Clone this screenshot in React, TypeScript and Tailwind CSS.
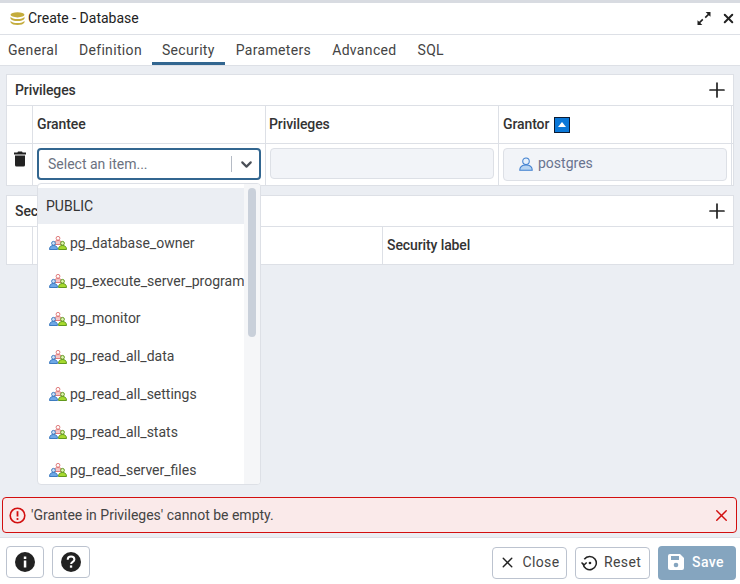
import { ChevronDown, Plus, X } from 'lucide-react';

const roles = [
  'pg_database_owner',
  'pg_execute_server_program',
  'pg_monitor',
  'pg_read_all_data',
  'pg_read_all_settings',
  'pg_read_all_stats',
  'pg_read_server_files',
];

function DbIcon() {
  return (
    <svg width="15" height="13" viewBox="0 0 16 14" className="shrink-0">
      <ellipse cx="8" cy="3" rx="7.500" ry="2.800" fill="#c4ac3c" />
      <path d="M.5 5c1 1.700 3.800 2.500 7.500 2.500s6.500-.8 7.500-2.500v2.300c-1 1.700-3.800 2.500-7.500 2.500s-6.500-.8-7.500-2.500z" fill="#c4ac3c" />
      <path d="M.5 9.300c1 1.700 3.800 2.500 7.500 2.500s6.500-.8 7.500-2.500v1.900c-1 1.800-3.800 2.700-7.500 2.700s-6.500-.9-7.500-2.700z" fill="#c4ac3c" />
    </svg>
  );
}

function Person({ x, y, head, fill, stroke }: { x: number; y: number; head: string; fill: string; stroke: string }) {
  return (
    <g transform={`translate(${x} ${y})`}>
      <circle cx="4.500" cy="2.300" r="1.900" fill={head} stroke={stroke} strokeWidth=".9" />
      <path d="M.5 8.500c0-2.700 1.400-4 4-4s4 1.300 4 4z" fill={fill} stroke={stroke} strokeWidth=".9" />
    </g>
  );
}

function GroupIcon() {
  return (
    <svg width="18" height="14" viewBox="0 0 18 14" className="shrink-0">
      <Person x={4.500} y={0} head="#fff" fill="#f6c6c6" stroke="#dc6e6e" />
      <Person x={0} y={5} head="#cfe2f7" fill="#6fa8e6" stroke="#2f70ba" />
      <Person x={9} y={5} head="#dff3b0" fill="#a6d92f" stroke="#558f10" />
    </svg>
  );
}

function UserIcon() {
  return (
    <svg width="14" height="14" viewBox="0 0 15 15" className="shrink-0">
      <circle cx="7.500" cy="4.500" r="3.500" fill="#e6f0fb" stroke="#3f7fcf" strokeWidth="1.100" />
      <path d="M.8 14.300c0-3.800 2.500-5.700 6.700-5.700s6.700 1.900 6.700 5.700z" fill="#b5d3f2" stroke="#3f7fcf" strokeWidth="1.100" />
    </svg>
  );
}

function Trash() {
  return (
    <svg width="12" height="16" viewBox="0 0 12 15">
      <path d="M4 0h4l.6 1H12v2H0V1h3.400zM1 4h10v9.500A1.500 1.500 0 0 1 9.500 15h-7A1.500 1.500 0 0 1 1 13.500z" fill="#222" />
    </svg>
  );
}

function ExpandIcon() {
  return (
    <svg width="14" height="13" viewBox="0 0 14 14" className="shrink-0">
      <path d="M8.800 0H14v5.200l-1.800-1.800-3.300 3.300-1.200-1.200 3.300-3.300z" fill="#222" />
      <path d="M5.200 14H0V8.800l1.800 1.800 3.300-3.300 1.200 1.200-3.300 3.300z" fill="#222" />
    </svg>
  );
}

export default function App() {
  return (
    <div className="relative flex h-[584px] w-[740px] flex-col overflow-hidden bg-white text-[14px] text-[#222] [font-family:Roboto,sans-serif]">
      <div className="h-[3px] bg-[#d8dbe1]" />
      <div className="flex h-[32px] items-center border-b border-[#dde0e6] pr-[4px] pl-[10px]">
        <DbIcon />
        <span className="ml-[3px] text-[14px]">Create - Database</span>
        <span className="ml-auto">
          <ExpandIcon />
        </span>
        <X className="ml-[10px]" size={15} strokeWidth={3.200} color="#222" />
      </div>
      <div className="flex h-[31px] items-stretch border-b border-[#dde0e6] text-[14px] tracking-[0.33px] text-[#444]">
        <div className="flex items-center pr-[21px] pl-[8px]">General</div>
        <div className="flex items-center pr-[10px]">Definition</div>
        <div className="flex items-center border-b-[3px] border-[#326690] px-[10px] pt-[3px]">Security</div>
        <div className="flex items-center pl-[11px]">Parameters</div>
        <div className="flex items-center pl-[21px]">Advanced</div>
        <div className="flex items-center pl-[21px]">SQL</div>
      </div>

      <div className="flex flex-1 flex-col gap-[9px] bg-[#ebeef3] px-[6px] pt-[8px]">
        <div className="border border-[#dde0e6] bg-white">
          <div className="flex h-[31px] items-center border-b border-[#dde0e6] pr-[4px] pl-[8px]">
            <span className="font-medium tracking-[-0.1px] text-[#333]">Privileges</span>
            <Plus className="ml-auto" size={24} strokeWidth={1.700} color="#222" />
          </div>
          <div className="flex h-[38px] border-b border-[#dde0e6] font-medium tracking-[-0.1px] text-[#333]">
            <div className="w-[26px] border-r border-[#dde0e6]" />
            <div className="flex w-[233px] items-center border-r border-[#dde0e6] pl-[4px]">Grantee</div>
            <div className="flex w-[233px] items-center border-r border-[#dde0e6] pl-[3px]">Privileges</div>
            <div className="flex w-[233px] items-center border-r border-[#dde0e6] pl-[4px]">
              Grantor
              <span className="ml-[5px] flex h-[16px] w-[16px] items-center justify-center border border-[#0b1b33] bg-[#0b78d8]">
                <span className="h-0 w-0 border-x-[4px] border-b-[5px] border-x-transparent border-b-white" />
              </span>
            </div>
          </div>
          <div className="flex h-[41px]">
            <div className="flex w-[26px] justify-center border-r border-[#dde0e6] pt-[7px]">
              <Trash />
            </div>
            <div className="w-[233px] border-r border-[#dde0e6] pt-[4px] pl-[4px]">
              <div className="flex h-[32px] w-[224px] items-center rounded-[4px] border-2 border-[#326690] bg-white">
                <span className="pl-[9px] text-[#6b7280]">Select an item...</span>
                <span className="ml-auto h-[16px] w-px bg-[#b5bbc5]" />
                <ChevronDown className="mr-[4px] ml-[6px]" size={17} strokeWidth={3} color="#4a4f57" />
              </div>
            </div>
            <div className="w-[233px] border-r border-[#dde0e6] pt-[4px] pl-[4px]">
              <div className="h-[31px] w-[224px] rounded-[4px] border border-[#dde0e6] bg-[#f2f4f8]" />
            </div>
            <div className="w-[233px] border-r border-[#dde0e6] pt-[4px] pl-[4px]">
              <div className="flex h-[33px] w-[224px] items-center gap-[5px] rounded-[4px] border border-[#dde0e6] bg-[#f2f4f8] pb-[2px] pl-[15px] text-[#69738f]">
                <UserIcon />
                postgres
              </div>
            </div>
          </div>
        </div>

        <div className="border border-[#dde0e6] bg-white">
          <div className="flex h-[31px] items-center border-b border-[#dde0e6] pr-[4px] pl-[8px]">
            <span className="font-medium tracking-[-0.1px] text-[#333]">Security labels</span>
            <Plus className="ml-auto" size={24} strokeWidth={1.700} color="#222" />
          </div>
          <div className="flex h-[37px] font-medium tracking-[-0.1px] text-[#333]">
            <div className="w-[26px] border-r border-[#dde0e6]" />
            <div className="w-[350px] border-r border-[#dde0e6]" />
            <div className="flex items-center pl-[4px]">Security label</div>
          </div>
        </div>
      </div>

      {/* Open grantee dropdown */}
      <div className="absolute top-[183px] left-[37px] flex h-[302px] w-[224px] overflow-hidden rounded-[4px] border border-[#dde0e6] bg-white">
        <div className="w-[206px] overflow-hidden pt-[4px]">
          <div className="flex h-[36.400px] items-center bg-[#ebeef3] pl-[8px] text-[#333]">PUBLIC</div>
          {roles.map((r) => (
            <div key={r} className="flex h-[37.800px] items-center gap-[3px] pl-[11px] whitespace-nowrap text-[#444]">
              <GroupIcon />
              {r}
            </div>
          ))}
        </div>
        <div className="flex-1 bg-[#f5f6f8] pt-[4px] pl-[4px]">
          <div className="h-[149px] w-[8px] rounded-[4px] bg-[#c9d0da]" />
        </div>
      </div>

      <div className="absolute top-[497px] right-[3px] left-[2px] flex h-[36px] items-center rounded-[4px] border border-[#d20f0f] bg-[#faeaea] pr-[5px] pl-[6px] text-[#444]">
        <svg width="17" height="17" viewBox="0 0 17 17" className="shrink-0">
          <circle cx="8.500" cy="8.500" r="7.300" fill="none" stroke="#d20f0f" strokeWidth="1.600" />
          <path d="M8.500 4.200v5.300" stroke="#d20f0f" strokeWidth="1.800" />
          <circle cx="8.500" cy="12" r="1.100" fill="#d20f0f" />
        </svg>
        <span className="ml-[5px]">'Grantee in Privileges' cannot be empty.</span>
        <X className="ml-auto" size={19} strokeWidth={1.800} color="#d20f0f" />
      </div>

      <div className="flex h-[47px] items-center border-t border-[#dde0e6] bg-white pt-[2px] pr-[4px] pl-[6px]">
        <button className="flex h-[32px] w-[38px] items-center justify-center rounded-[4px] border border-[#bcc3cf]">
          <svg width="20" height="20" viewBox="0 0 20 20">
            <circle cx="10" cy="10" r="10" fill="#222" />
            <rect x="8.800" y="8.500" width="2.500" height="7" fill="#fff" />
            <rect x="8.800" y="4.500" width="2.500" height="2.500" fill="#fff" />
          </svg>
        </button>
        <button className="ml-[8px] flex h-[32px] w-[38px] items-center justify-center rounded-[4px] border border-[#bcc3cf]">
          <svg width="20" height="20" viewBox="0 0 20 20">
            <circle cx="10" cy="10" r="10" fill="#222" />
            <path d="M6.700 7.800c0-2 1.500-3.200 3.400-3.200s3.300 1.200 3.300 2.900c0 2.300-3.300 2.300-3.300 4.400" fill="none" stroke="#fff" strokeWidth="2" />
            <rect x="8.900" y="13.400" width="2.300" height="2.300" fill="#fff" />
          </svg>
        </button>
        <button className="mt-[2px] ml-auto flex h-[32px] w-[75px] items-center justify-center gap-[6px] rounded-[4px] border border-[#bcc3cf] pb-[2px] tracking-[0.4px] text-[#444]">
          <X size={17} strokeWidth={2} color="#222" />
          Close
        </button>
        <button className="mt-[2px] ml-[8px] flex h-[32px] w-[75px] items-center gap-[6px] rounded-[4px] border border-[#bcc3cf] pb-[2px] pl-[5px] tracking-[0.4px] text-[#444]">
          <svg width="17" height="17" viewBox="0 0 18 18" fill="none" stroke="#222" strokeWidth="1.600">
            <path d="M3.500 5.500A7 7 0 1 1 2.200 10" />
            <path d="M0.500 9l2.700 2.700L6 9" />
            <circle cx="9.500" cy="9.500" r="1.400" fill="#222" stroke="none" />
          </svg>
          Reset
        </button>
        <button className="mt-[2px] ml-[8px] flex h-[34px] w-[78px] items-center gap-[8px] rounded-[4px] bg-[#85a5bf] pb-[2px] pl-[10px] font-medium tracking-[0.4px] text-white">
          <svg width="16" height="16" viewBox="0 0 16 16">
            <path d="M2 0h10l4 4v10a2 2 0 0 1-2 2H2a2 2 0 0 1-2-2V2a2 2 0 0 1 2-2z" fill="#fff" />
            <rect x="3" y="2" width="8" height="4" fill="#85a5bf" />
            <circle cx="8" cy="11" r="2.300" fill="#85a5bf" />
          </svg>
          Save
        </button>
      </div>
    </div>
  );
}
